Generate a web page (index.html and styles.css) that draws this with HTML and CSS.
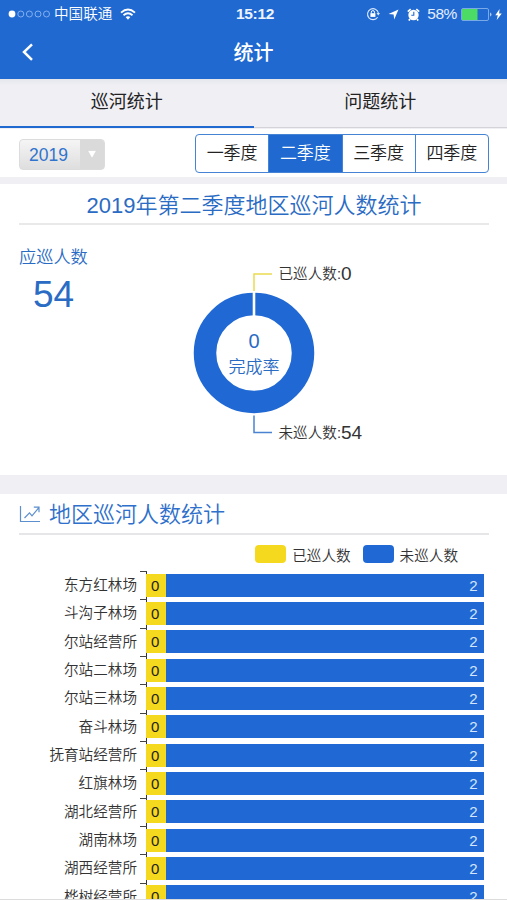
FILE: index.html
```html
<!DOCTYPE html>
<html lang="zh-CN">
<head>
<meta charset="utf-8">
<title>统计</title>
<link rel="stylesheet" href="styles.css">
</head>
<body>
<header class="top">
  <div class="status">
    <div class="carrier">
      <svg width="43" height="10" viewBox="0 0 43 10"><circle cx="4" cy="5" r="3.4" fill="#fff"/><g fill="none" stroke="#8db6f0" stroke-width=".9"><circle cx="12.8" cy="5" r="3"/><circle cx="21.4" cy="5" r="3"/><circle cx="30" cy="5" r="3"/><circle cx="38.5" cy="5" r="3"/></g></svg>
      <span class="name">中国联通</span>
      <svg width="16" height="12" viewBox="0 0 16 12"><g fill="none" stroke="#fff" stroke-width="1.9"><path d="M1 4.6Q8-1.6 15 4.6"/><path d="M3.5 7.2Q8 3.3 12.5 7.2"/></g><path d="M5.6 9.1Q8 7.2 10.4 9.1L8 11.8Z" fill="#fff"/></svg>
    </div>
    <div class="clock">15:12</div>
    <div class="indicators">
      <svg class="lock" width="14" height="14" viewBox="0 0 14 14"><path d="M11.6 10.2A5.5 5.5 0 1 1 12.4 6" fill="none" stroke="#d9e8ff" stroke-width="1.1"/><path d="M10.5 6h3.5l-1.7 2.4z" fill="#d9e8ff"/><rect x="4.4" y="6.2" width="5" height="3.7" fill="#fff"/><path d="M5.3 6.4V5.2a1.6 1.6 0 0 1 3.2 0v1.2" fill="none" stroke="#fff"/></svg>
      <svg class="arrow" width="11" height="11" viewBox="0 0 11 11"><path d="M10.5.5L6.2 10.5 5.6 5.5.5 4.9z" fill="#fff"/></svg>
      <svg class="alarm" width="13" height="13" viewBox="0 0 13 13"><circle cx="6.5" cy="7" r="5.2" fill="#fff"/><path d="M.8 3.7L3.7 1.1M12.2 3.7L9.3 1.1M3 11l-1.2 1.6M10 11l1.2 1.6" stroke="#fff" stroke-width="1.7"/><path d="M6.8 3.7v3.5H4.3" fill="none" stroke="#2069d1" stroke-width="1.1"/></svg>
      <span class="percent">58%</span>
      <svg class="battery" width="31" height="13" viewBox="0 0 31 13"><rect x=".5" y=".5" width="27" height="12" rx="1.5" fill="none" stroke="#79a9e6"/><rect x="1" y="1" width="15.5" height="11" fill="#4cdb64"/><path d="M29 4.5q1.5.3 1.5 2T29 8.500z" fill="#a9caf3"/></svg>
      <svg class="bolt" width="7" height="11" viewBox="0 0 7 11"><path d="M4.600 0L.3 6.200h2.500L1.700 11 6.800 4.500H4.100z" fill="#fff"/></svg>
    </div>
  </div>
  <div class="navbar">
    <svg class="back" width="12" height="18" viewBox="0 0 12 18"><path d="M10 1.300L2 9l8 7.800" fill="none" stroke="#fff" stroke-width="2.500"/></svg>
    <h1>统计</h1>
  </div>
</header>
<nav class="tabs"><div class="tab active">巡河统计</div><div class="tab">问题统计</div></nav>
<div class="filters">
  <div class="year"><span class="value">2019</span><span class="drop"><svg width="10" height="9" viewBox="0 0 10 9"><path d="M.5.5h9L5 8.500z" fill="#fff" stroke="#d2d2d2" stroke-width=".6"/></svg></span></div>
  <div class="quarters"><div>一季度</div><div class="on">二季度</div><div>三季度</div><div>四季度</div></div>
</div>
<section class="summary">
  <h2>2019年第二季度地区巡河人数统计</h2>
  <div class="overview">
    <div class="total"><div>应巡人数</div><strong>54</strong></div>
    <svg class="donut" width="200" height="200" viewBox="0 0 200 200">
      <circle cx="74" cy="98" r="49" fill="none" stroke="#2069d4" stroke-width="22.500"/>
      <path d="M74 36V61" stroke="#fff" stroke-width="2.600"/>
      <path d="M74 36V19H92" fill="none" stroke="#eadb4e" stroke-width="1.500"/>
      <path d="M74 160.500V177.500H92" fill="none" stroke="#4b82d2" stroke-width="1.500"/>
      <g class="callout"><text x="98.500" y="24">已巡人数:<tspan class="num" dy="1">0</tspan></text><text x="98.500" y="183">未巡人数:<tspan class="num" dy="1">54</tspan></text></g>
      <text class="rate" x="74" y="93" font-size="20">0</text><text class="rate" x="74" y="118" font-size="17">完成率</text>
    </svg>
  </div>
</section>
<section class="regions">
  <h3><svg width="22" height="18" viewBox="0 0 22 18"><g fill="none" stroke="#5b8fce" stroke-width="1.200"><path d="M1.500 1v15.500h19.500"/><path d="M5.500 13l5-5.200 2.500 3 7-8.300M14.800 2.200H20v5"/></g></svg><span>地区巡河人数统计</span></h3>
  <div class="legend"><i class="done"></i><span>已巡人数</span><i class="todo"></i><span>未巡人数</span></div>
  <div class="chart" id="chart"></div>
</section>
<script src="chart.js"></script>
</body>
</html>
```
FILE: styles.css
```css
* { box-sizing: border-box; }
body {
  margin: 0;
  height: 900px;
  overflow: hidden;
  display: flex;
  flex-direction: column;
  background: #efeff4;
  color: #222;
  font-family: "Liberation Sans", "Noto Sans CJK SC", sans-serif;
}
svg { display: block; flex: none; }
h1, h2, h3 { margin: 0; font-weight: 400; }
.top { height: 79px; flex: none; background: #2069d1; color: #fff; }
.status { height: 28px; display: grid; grid-template-columns: 1fr auto 1fr; align-items: center; padding: 0 5px 0 8px; }
.carrier { display: flex; align-items: center; gap: 3px; }
.carrier .name { font-size: 14.6px; line-height: 20px; margin-right: 5px; font-weight: 350; }
.clock { font-size: 15.5px; font-weight: 700; letter-spacing: -.3px; color: #edf4ff; }
.indicators { display: flex; align-items: center; justify-content: flex-end; }
.arrow { margin-left: 8px; }
.alarm { margin-left: 8px; }
.percent { font-size: 15.5px; margin: 0 4px 0 7px; letter-spacing: -.4px; color: #e3eeff; }
.bolt { margin-left: 3px; }
.navbar { height: 51px; display: grid; grid-template-columns: 1fr auto 1fr; align-items: center; padding: 0 22px 3px; }
.navbar h1 { font-size: 20px; line-height: 30px; font-weight: 500; margin-top: 1px; }
.tabs { height: 50px; flex: none; display: flex; background: linear-gradient(#e5e6eb, #efeff4 6px); }
.tab { flex: 1; text-align: center; font-size: 18px; line-height: 47px; border-bottom: 1px solid #d3d3d9; margin-bottom: 1px; }
.tab.active { border-bottom: 2px solid #2069d1; margin-bottom: 1px; }
.filters { height: 48px; flex: none; display: flex; justify-content: space-between; padding: 5px 18px 0 19px; background: #fff; }
.year { width: 86px; height: 31px; margin-top: 5px; display: flex; border: 1px solid #dcdcdc; border-radius: 4px; background: linear-gradient(#f5f5f5, #dedede); overflow: hidden; }
.year .value { width: 60px; padding-left: 9px; font-size: 17.5px; line-height: 31px; color: #3274cd; }
.year .drop { flex: 1; display: flex; align-items: center; justify-content: center; background: #dadada; }
.quarters { width: 294px; height: 39px; display: flex; border: 1.5px solid #4583d4; border-radius: 4px; overflow: hidden; }
.quarters div { flex: 1; text-align: center; font-size: 17px; line-height: 38px; font-weight: 350; }
.quarters div + div { border-left: 1px solid #4583d4; }
.quarters .on { background: #2069d1; color: #fff; }
.summary { height: 291px; flex: none; margin-top: 7px; padding: 0 18px 0 19px; background: #fff; }
.summary h2 { height: 41px; border-bottom: 2px solid #e9e9ea; text-align: center; font-size: 22px; line-height: 43px; font-weight: 350; color: #2a6bc4; }
.overview { display: flex; }
.total { width: 161px; padding-top: 20px; font-size: 17.2px; line-height: 25px; font-weight: 350; color: #2a6bc4; }
.total strong { display: block; width: 69px; text-align: center; font-size: 37px; line-height: 49px; font-weight: 400; color: #2a6bc4; }
.donut { margin-top: 30px; }
.callout { font-size: 14.6px; fill: #333; font-weight: 350; }
.num { font-size: 19px; }
.rate { text-anchor: middle; fill: #2a6bc4; font-weight: 350; }
.regions { flex: 1; min-height: 0; overflow: hidden; margin-top: 19px; background: #fff; border-bottom: 1px solid #dcdcdc; }
.regions h3 { height: 41px; margin: 0 18px 0 19px; border-bottom: 2px solid #e6e6e8; display: flex; align-items: center; gap: 8px; font-size: 22px; line-height: 39px; font-weight: 350; color: #2e70cb; }
.regions h3 span { padding-top: 1px; }
.legend { height: 36px; padding: 2px 49px 0 0; display: flex; align-items: center; justify-content: flex-end; font-size: 14.6px; font-weight: 350; color: #333; }
.legend i { width: 31px; height: 18px; border-radius: 4px; margin-right: 6px; }
.legend span + i { margin-left: 12px; }
.done { background: #f4d91e; }
.todo { background: #2069d4; }
.row { height: 28.33px; display: flex; align-items: center; }
.row .label { width: 137px; text-align: right; font-size: 14.6px; line-height: 26px; font-weight: 350; color: #333; }
.row .axis { width: 10px; height: 28.33px; margin-left: -.5px; border-right: 1px solid #333; align-self: flex-start; }
.row .axis::before { content: ""; display: block; width: 7px; height: 1px; margin-left: 3px; background: #444; }
.row .bar { height: 23px; line-height: 24px; font-size: 15px; }
.row .done { width: 20px; margin-left: -.5px; text-align: center; padding-right: 1.5px; }
.row .todo { width: 318px; text-align: right; padding-right: 6.5px; color: #d4e5fc; }
```
FILE: chart.js
```js
const areas = ["东方红林场", "斗沟子林场", "尔站经营所", "尔站二林场", "尔站三林场", "奋斗林场",
  "抚育站经营所", "红旗林场", "湖北经营所", "湖南林场", "湖西经营所", "桦树经营所"];
document.getElementById("chart").innerHTML = areas.map(name =>
  `<div class="row"><span class="label">${name}</span><span class="axis"></span><span class="bar done">0</span><span class="bar todo">2</span></div>`
).join("");
```
